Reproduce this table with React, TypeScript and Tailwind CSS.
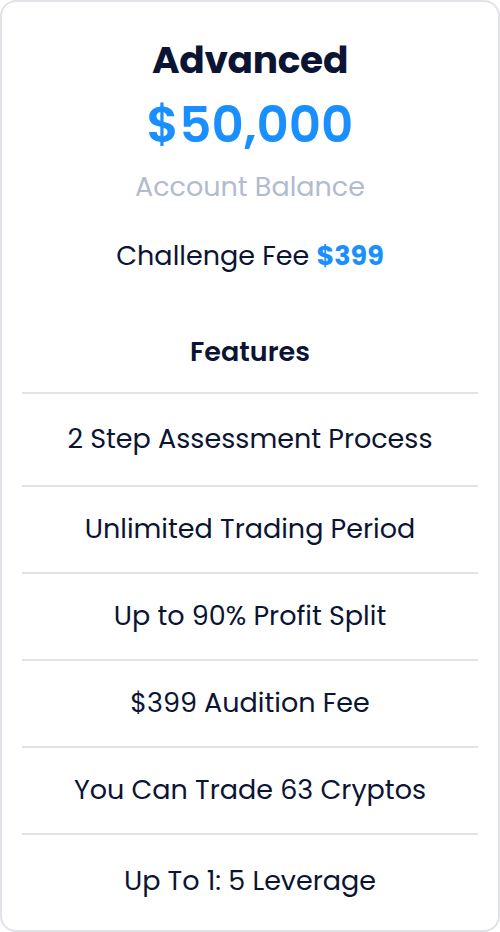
import React from "react";

const features = [
  "2 Step Assessment Process",
  "Unlimited Trading Period",
  "Up to 90% Profit Split",
  "$399 Audition Fee",
  "You Can Trade 63 Cryptos",
  "Up To 1: 5 Leverage",
];

export default function App() {
  return (
    <div
      className="w-[500px] h-[932px] bg-white"
      style={{ fontFamily: "Poppins, Inter, 'Noto Sans', sans-serif" }}
    >
      <div className="w-full h-full box-border border-2 border-[#e2e3e9] rounded-[16px] flex flex-col items-center pt-[36px] text-[#0b1533]">
        <div className="text-[37.5px] leading-[44px] font-bold tracking-[-0.3px]">Advanced</div>
        <div className="mt-[13px] text-[50px] leading-[60px] font-semibold text-[#1a8fff]">$50,000</div>
        <div className="mt-[16px] text-[27px] leading-[32px] text-[#b3bbd0]">Account Balance</div>
        <div className="mt-[37px] text-[27px] leading-[32px]">
          Challenge Fee <span className="font-bold text-[#1a8fff]">$399</span>
        </div>
        <div className="mt-[64px] text-[27px] leading-[32px] font-semibold">Features</div>
        <div className="mt-[24px] w-[456px] flex flex-col">
          {features.map((f, i) => (
            <div
              key={f}
              className={
                "border-t-2 border-[#e2e3e9] flex items-center justify-center text-[27px] " +
                (i === 0 ? "h-[93px]" : i === features.length - 1 ? "h-[95px]" : "h-[87px]")
              }
            >
              {f}
            </div>
          ))}
        </div>
      </div>
    </div>
  );
}
